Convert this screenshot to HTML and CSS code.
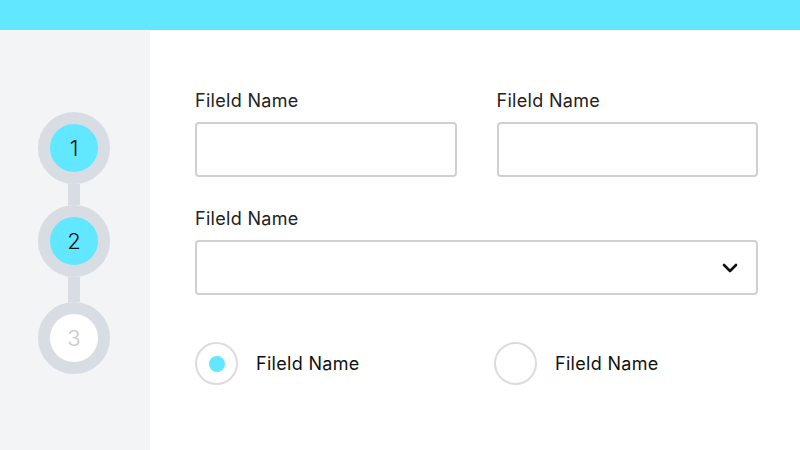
FILE: index.html
```html
<!doctype html>
<html>

<head>
  <title>Steps Form</title>
  <meta http-equiv="Content-Type" content="text/html; charset=UTF-8">
  <link rel="stylesheet" href="styles.css">
</head>

<body>
  <div class="topbar"></div>
  <div class="layout">
    <div class="sidebar">
      <div class="steps">
        <div class="step done"><span>1</span></div>
        <div class="line short"></div>
        <div class="step done"><span>2</span></div>
        <div class="line"></div>
        <div class="step"><span>3</span></div>
      </div>
    </div>
    <div class="main">
      <div class="row">
        <div class="field">
          <label>Fileld Name</label>
          <div class="input"></div>
        </div>
        <div class="field">
          <label>Fileld Name</label>
          <div class="input"></div>
        </div>
      </div>
      <div class="field">
        <label>Fileld Name</label>
        <div class="input select">
          <svg width="16" height="10" viewBox="0 0 16 10">
            <path d="M2 2 L8 8 L14 2" fill="none" stroke="#111" stroke-width="2.6" stroke-linecap="round" stroke-linejoin="round" />
          </svg>
        </div>
      </div>
      <div class="radios">
        <div class="radio checked"><span class="dot"></span><span class="text">Fileld Name</span></div>
        <div class="radio"><span class="dot"></span><span class="text">Fileld Name</span></div>
      </div>
    </div>
  </div>
</body>

</html>
```

FILE: styles.css
```css
html,
body {
  margin: 0;
  height: 100%;
  background-color: white;
  font-family: 'Inter', sans-serif;
  color: #222;
}

.topbar {
  height: 30px;
  background-color: #61e7ff;
}

.layout {
  display: flex;
  height: 420px;
}

.sidebar {
  flex: 0 0 150px;
  background-color: #f3f4f6;
  display: flex;
  justify-content: center;
}

.steps {
  display: flex;
  flex-direction: column;
  align-items: center;
  padding-top: 82px;
  margin-left: -2px;
}

.step {
  width: 48px;
  height: 48px;
  border: 12px solid #d8dde3;
  border-radius: 50%;
  background-color: white;
  display: flex;
  align-items: center;
  justify-content: center;
  font-size: 22px;
  font-weight: 300;
  color: #c8c8c8;
}

.step.done {
  background-color: #61e7ff;
  color: #111;
}

.line {
  width: 12px;
  height: 25px;
  background-color: #d8dde3;
}

.line.short {
  height: 21px;
}

.main {
  flex: 1;
  min-width: 0;
  padding: 60px 42px 0 45px;
}

.row {
  display: flex;
  gap: 40px;
}

.row .field {
  flex: 1;
}

.field {
  margin-bottom: 31px;
}

.field label {
  display: block;
  font-size: 18px;
  letter-spacing: 0.3px;
  line-height: 22px;
  margin-bottom: 10px;
}

.input {
  height: 51px;
  border: 2px solid #d0d0d0;
  border-radius: 4px;
}

.select {
  display: flex;
  align-items: center;
  justify-content: flex-end;
  padding-right: 18px;
}

.radios {
  display: flex;
  margin-top: 47px;
}

.radio {
  display: flex;
  align-items: center;
}

.radio:first-child {
  width: 299px;
}

.radio .dot {
  width: 39px;
  height: 39px;
  border: 2px solid #dcdcdc;
  border-radius: 50%;
  display: flex;
  align-items: center;
  justify-content: center;
  margin-right: 18px;
}

.radio.checked .dot::after {
  content: '';
  width: 16px;
  height: 16px;
  border-radius: 50%;
  background-color: #61e7ff;
}

.radio .text {
  font-size: 18px;
  letter-spacing: 0.3px;
  color: #111;
}
```
